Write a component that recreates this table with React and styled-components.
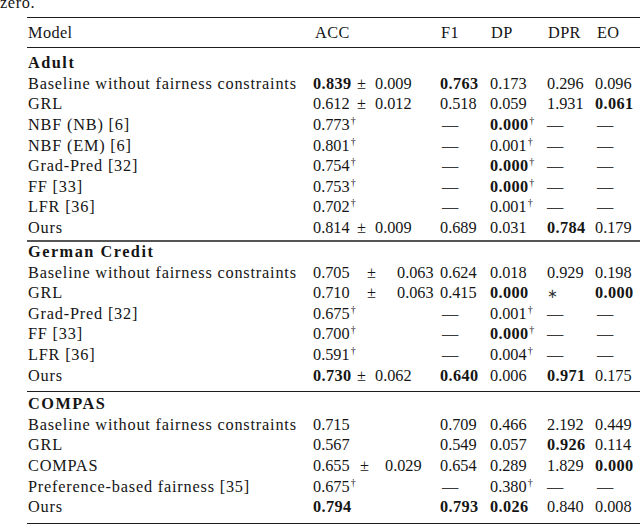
import React from "react";
import styled, { createGlobalStyle } from "styled-components";

const GlobalStyle = createGlobalStyle`
  html, body {
    margin: 0;
    background: #fff;
  }
  body {
    font-family: "Liberation Serif", "Times New Roman", serif;
    font-size: 16.3px;
    color: #151515;
  }
`;

const Lead = styled.div`
  height: 11px;
  overflow: hidden;
`;

const LeadText = styled.p`
  margin: -7.5px 0 0;
  line-height: 20px;
  letter-spacing: 0.6px;
`;

const Table = styled.div`
  margin: 6px 0 0 27px;
`;

const Rule = styled.div`
  height: ${(p) => p.$w}px;
  background: ${(p) => p.$c || "#1c1c1c"};
  margin: ${(p) => p.$before || 0}px 0 ${(p) => p.$after || 0}px;
`;

const Row = styled.div`
  display: grid;
  grid-template-columns: 286px 127px 50px 57px 48px 1fr;
  height: 20.6px;
  line-height: 20.6px;
  white-space: nowrap;
`;

const Name = styled.div`
  padding-left: 1px;
  font-weight: ${(p) => (p.$title ? 700 : 400)};
  letter-spacing: ${(p) => (p.$title ? "1.5px" : "0.8px")};
`;

const Head = styled.div`
  padding-left: ${(p) => p.$indent || 1}px;
  letter-spacing: 0.4px;
`;

const Cell = styled.div`
  padding-left: ${(p) => p.$indent || 0}px;
`;

const Acc = styled.div`
  display: grid;
  grid-template-columns: ${(p) => p.$pm}px ${(p) => p.$sd - p.$pm}px auto;
`;

const Num = styled.span`
  font-weight: ${(p) => (p.$bold ? 700 : 400)};
  letter-spacing: ${(p) => (p.$bold ? "0.4px" : "0")};
  margin-right: ${(p) => (p.$bold ? "-0.4px" : "0")};
`;

const Dag = styled.span`
  font-size: 10px;
  line-height: 0;
  vertical-align: 6px;
  margin-left: 1px;
`;

const Dash = styled.span`
  color: #3a3a3a;
  padding-left: ${(p) => p.$indent || 0}px;
`;

const Star = styled.span`
  color: #333;
  font-family: "DejaVu Sans", sans-serif;
  font-size: 13px;
`;

// value: "—", "*", or { v, b, d }
function Value({ val, dashIndent }) {
  if (val === "—") return <Dash $indent={dashIndent}>—</Dash>;
  if (val === "*") return <Star>∗</Star>;
  const o = typeof val === "string" ? { v: val } : val;
  return (
    <span>
      <Num $bold={o.b}>{o.v}</Num>
      {o.d && <Dag>†</Dag>}
    </span>
  );
}

const SPREAD = {
  compact: { pm: 44, sd: 62 },
  wide: { pm: 54, sd: 84 },
  mid: { pm: 47, sd: 72 },
};

function AccCell({ acc }) {
  if (!acc.sd) {
    return (
      <Cell>
        <Value val={acc} />
      </Cell>
    );
  }
  const s = SPREAD[acc.spread || "compact"];
  return (
    <Acc $pm={s.pm} $sd={s.sd}>
      <Num $bold={acc.b}>{acc.v}</Num>
      <span>±</span>
      <Num>{acc.sd}</Num>
    </Acc>
  );
}

const sections = [
  {
    title: "Adult",
    rows: [
      ["Baseline without fairness constraints", { v: "0.839", b: true, sd: "0.009" }, { v: "0.763", b: true }, "0.173", "0.296", "0.096"],
      ["GRL", { v: "0.612", sd: "0.012" }, "0.518", "0.059", "1.931", { v: "0.061", b: true }],
      ["NBF (NB) [6]", { v: "0.773", d: true }, "—", { v: "0.000", b: true, d: true }, "—", "—"],
      ["NBF (EM) [6]", { v: "0.801", d: true }, "—", { v: "0.001", d: true }, "—", "—"],
      ["Grad-Pred [32]", { v: "0.754", d: true }, "—", { v: "0.000", b: true, d: true }, "—", "—"],
      ["FF [33]", { v: "0.753", d: true }, "—", { v: "0.000", b: true, d: true }, "—", "—"],
      ["LFR [36]", { v: "0.702", d: true }, "—", { v: "0.001", d: true }, "—", "—"],
      ["Ours", { v: "0.814", sd: "0.009" }, "0.689", "0.031", { v: "0.784", b: true }, "0.179"],
    ],
  },
  {
    title: "German Credit",
    rows: [
      ["Baseline without fairness constraints", { v: "0.705", sd: "0.063", spread: "wide" }, "0.624", "0.018", "0.929", "0.198"],
      ["GRL", { v: "0.710", sd: "0.063", spread: "wide" }, "0.415", { v: "0.000", b: true }, "*", { v: "0.000", b: true }],
      ["Grad-Pred [32]", { v: "0.675", d: true }, "—", { v: "0.001", d: true }, "—", "—"],
      ["FF [33]", { v: "0.700", d: true }, "—", { v: "0.000", b: true, d: true }, "—", "—"],
      ["LFR [36]", { v: "0.591", d: true }, "—", { v: "0.004", d: true }, "—", "—"],
      ["Ours", { v: "0.730", b: true, sd: "0.062" }, { v: "0.640", b: true }, "0.006", { v: "0.971", b: true }, "0.175"],
    ],
  },
  {
    title: "COMPAS",
    rows: [
      ["Baseline without fairness constraints", { v: "0.715" }, "0.709", "0.466", "2.192", "0.449"],
      ["GRL", { v: "0.567" }, "0.549", "0.057", { v: "0.926", b: true }, "0.114"],
      ["COMPAS", { v: "0.655", sd: "0.029", spread: "mid" }, "0.654", "0.289", "1.829", { v: "0.000", b: true }],
      ["Preference-based fairness [35]", { v: "0.675", d: true }, "—", { v: "0.380", d: true }, "—", "—"],
      ["Ours", { v: "0.794", b: true }, { v: "0.793", b: true }, { v: "0.026", b: true }, "0.840", "0.008"],
    ],
  },
];

const separators = [
  { w: 2, c: "#555", before: 1.5, after: 0 },
  { w: 1, c: "#1c1c1c", before: 5, after: 2 },
  { w: 1.3, c: "#1c1c1c", before: 5, after: 0 },
];

function Section({ title, rows }) {
  return (
    <>
      <Row>
        <Name $title>{title}</Name>
      </Row>
      {rows.map(([name, acc, f1, dp, dpr, eo]) => (
        <Row key={name}>
          <Name>{name}</Name>
          <AccCell acc={acc} />
          <Cell>
            <Value val={f1} dashIndent={2} />
          </Cell>
          <Cell>
            <Value val={dp} />
          </Cell>
          <Cell>
            <Value val={dpr} />
          </Cell>
          <Cell>
            <Value val={eo} dashIndent={2} />
          </Cell>
        </Row>
      ))}
    </>
  );
}

export default function App() {
  return (
    <>
      <GlobalStyle />
      <Lead>
        <LeadText>zero.</LeadText>
      </Lead>
      <Table>
        <Rule $w={1.3} $after={5} />
        <Row>
          <Head>Model</Head>
          <Head $indent={2}>ACC</Head>
          <Head>F1</Head>
          <Head>DP</Head>
          <Head>DPR</Head>
          <Head $indent={2}>EO</Head>
        </Row>
        <Rule $w={0.8} $before={3} $after={5.5} />
        {sections.map((s, i) => (
          <React.Fragment key={s.title}>
            <Section title={s.title} rows={s.rows} />
            <Rule
              $w={separators[i].w}
              $c={separators[i].c}
              $before={separators[i].before}
              $after={separators[i].after}
            />
          </React.Fragment>
        ))}
      </Table>
    </>
  );
}
